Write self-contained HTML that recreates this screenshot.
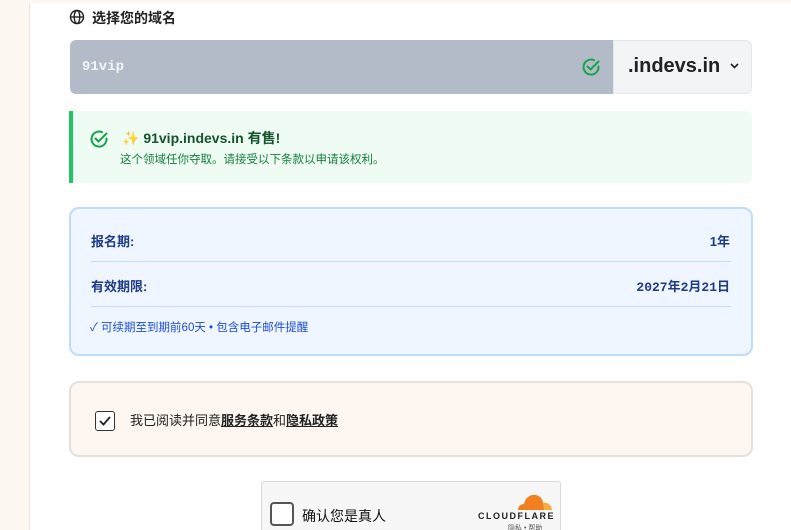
<!DOCTYPE html>
<html style="width:791px;height:530px;overflow:hidden"><head><meta charset="utf-8"><style>
*{box-sizing:border-box;margin:0;padding:0}
html,body{width:791px;height:530px;overflow:hidden}
body{background:#fdf7f2;font-family:"Liberation Sans","Noto Sans CJK SC",sans-serif;position:relative}
.main{position:absolute;left:29px;top:3px;right:0;bottom:0;background:#fff;border-left:1px solid #eee4dc}
.abs{position:absolute}
</style></head><body>
<div class="main"></div>
<svg class="abs" style="left:69px;top:9px" width="16" height="16" viewBox="0 0 16 16" fill="none" stroke="#222" stroke-width="1.4"><circle cx="8" cy="8" r="6.5"/><ellipse cx="8" cy="8" rx="2.8" ry="6.5"/><path d="M1.5 8h13"/></svg>
<div class="abs" style="left:92px;top:8px;font-size:14px;font-weight:bold;color:#222">选择您的域名</div>

<div class="abs" style="left:70px;top:40px;width:544px;height:54px;background:#b4bbc8;border-radius:6px 0 0 6px"></div>
<div class="abs" style="left:82px;top:59px;font-family:'Liberation Mono',monospace;font-size:14px;font-weight:bold;color:#f3f4f6">91vip</div>
<svg class="abs" style="left:581px;top:57px" width="20" height="20" viewBox="0 0 20 20" fill="none" stroke="#16a34a" stroke-width="2" stroke-linecap="round"><path d="M17.5 9.5A7.5 7.5 0 1 1 13 3.2"/><path d="M6.5 9.5l3 3 8-8"/></svg>
<div class="abs" style="left:613px;top:40px;width:139px;height:54px;background:#f3f4f6;border:1px solid #e5e7eb;border-radius:0 6px 6px 0"></div>
<div class="abs" style="left:628px;top:55px;font-size:20px;font-weight:bold;color:#222">.indevs.in</div>
<svg class="abs" style="left:730px;top:63px" width="9" height="6" viewBox="0 0 9 6" fill="none" stroke="#222" stroke-width="1.6"><path d="M1 1l3.5 3.5L8 1"/></svg>

<div class="abs" style="left:69px;top:111px;width:683px;height:72px;background:#effcf3;border-left:4px solid #22c55e;border-radius:0 6px 6px 0"></div>
<svg class="abs" style="left:89px;top:129px" width="20" height="20" viewBox="0 0 20 20" fill="none" stroke="#16a34a" stroke-width="2" stroke-linecap="round"><path d="M17.5 9.5A7.5 7.5 0 1 1 13 3.2"/><path d="M6.5 9.5l3 3 8-8"/></svg>
<div class="abs" style="left:122px;top:128px;font-size:14px;font-weight:bold;color:#14532d"><span style="color:#f59e0b">✨</span> 91vip.indevs.in 有售!</div>
<div class="abs" style="left:120px;top:151px;font-size:11.5px;color:#15803d">这个领域任你夺取。请接受以下条款以申请该权利。</div>

<div class="abs" style="left:69px;top:207px;width:684px;height:149px;background:#eff6ff;border:2px solid #bfdbfe;border-radius:10px"></div>
<div class="abs" style="left:91px;top:231px;font-size:13px;font-weight:bold;color:#1e3a8a">报名期:</div>
<div class="abs" style="right:61px;top:231px;font-size:13px;font-weight:bold;color:#1e3a8a">1年</div>
<div class="abs" style="left:91px;top:261px;width:640px;height:1px;background:#bfdbfe"></div>
<div class="abs" style="left:91px;top:276px;font-size:13px;font-weight:bold;color:#1e3a8a">有效期限:</div>
<div class="abs" style="right:61px;top:276px;font-size:13px;font-weight:bold;color:#1e3a8a;font-family:'Liberation Mono','Noto Sans CJK SC',monospace">2027年2月21日</div>
<div class="abs" style="left:91px;top:306px;width:640px;height:1px;background:#bfdbfe"></div>
<div class="abs" style="left:90px;top:319px;font-size:11.5px;color:#1d4ed8">✓ 可续期至到期前60天 • 包含电子邮件提醒</div>

<div class="abs" style="left:69px;top:381px;width:684px;height:76px;background:#fdf6f1;border:2px solid #e5e0dc;border-radius:10px"></div>
<div class="abs" style="left:95px;top:411px;width:20px;height:20px;border:1.5px solid #333;border-radius:3px;background:#fff"></div>
<svg class="abs" style="left:98px;top:415px" width="14" height="12" viewBox="0 0 14 12" fill="none" stroke="#222" stroke-width="1.8"><path d="M2 6l3.5 3.5L12 2"/></svg>
<div class="abs" style="left:130px;top:410px;font-size:13px;color:#222">我已阅读并同意<b style="text-decoration:underline">服务条款</b>和<b style="text-decoration:underline">隐私政策</b></div>

<div class="abs" style="left:261px;top:481px;width:300px;height:60px;background:#f7f7f7;border:1px solid #d9d9d9;border-radius:3px"></div>
<div class="abs" style="left:270px;top:502px;width:24px;height:24px;border:2px solid #555;border-radius:4px;background:#fff"></div>
<div class="abs" style="left:302px;top:506px;font-size:14px;color:#111">确认您是真人</div>
<svg class="abs" style="left:515px;top:492px" width="38" height="18" viewBox="0 0 38 18"><path d="M3 18c0-4 3-6 6-6 1-6 6-10 12-9 4 1 7 4 7 8 3-1 8 1 9 7z" fill="#f38020"/><path d="M28 11c3-1 8 1 9 7h-8z" fill="#fbad41"/></svg>
<div class="abs" style="left:478px;top:511px;font-size:9px;font-weight:bold;letter-spacing:1.5px;color:#222">CLOUDFLARE</div>
<div class="abs" style="left:508px;top:523px;font-size:7px;color:#555">隐私 • 帮助</div>
</body></html>
